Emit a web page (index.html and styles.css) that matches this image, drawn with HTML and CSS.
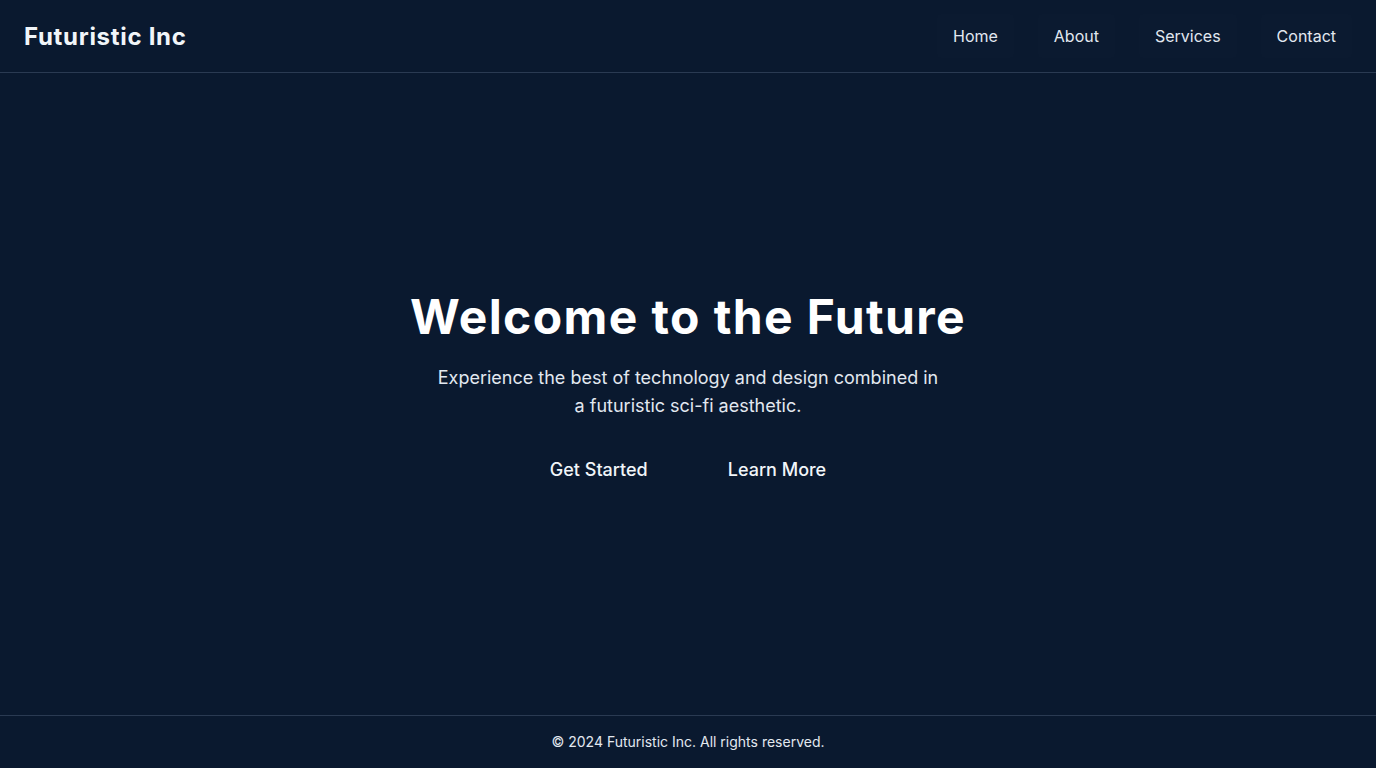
FILE: index.html
```html
<!DOCTYPE html>
<html lang="en">
<head>
<meta charset="utf-8">
<title>Futuristic Inc</title>
<link rel="stylesheet" href="styles.css">
</head>
<body>
<div class="page">
  <header class="header">
    <div class="logo">Futuristic Inc</div>
    <nav class="nav">
      <a class="nav-link" href="#">Home</a>
      <a class="nav-link" href="#">About</a>
      <a class="nav-link" href="#">Services</a>
      <a class="nav-link" href="#">Contact</a>
    </nav>
  </header>
  <main class="hero">
    <h1 class="title">Welcome to the Future</h1>
    <p class="subtitle">Experience the best of technology and design combined in a futuristic sci-fi aesthetic.</p>
    <div class="actions">
      <a class="btn" href="#">Get Started</a>
      <a class="btn" href="#">Learn More</a>
    </div>
  </main>
  <footer class="footer">© 2024 Futuristic Inc. All rights reserved.</footer>
</div>
</body>
</html>
```
FILE: styles.css
```css
* { box-sizing: border-box; }
html, body { margin: 0; padding: 0; }
body {
  background: #0a192f;
  color: #ccd6f6;
  font-family: Inter, "Noto Sans", sans-serif;
}
.page {
  min-height: 100vh;
  display: flex;
  flex-direction: column;
}
.header {
  height: 73px;
  display: flex;
  align-items: center;
  justify-content: space-between;
  padding: 0 24px;
  border-bottom: 1px solid #2a3a52;
}
.logo {
  font-size: 24px;
  font-weight: 700;
  color: #f1f5f9;
  letter-spacing: 0.7px;
}
.nav {
  display: flex;
  gap: 24px;
}
.nav-link {
  display: block;
  padding: 10px 16px;
  line-height: 24px;
  font-size: 16px;
  color: #e2e8f0;
  text-decoration: none;
  background: rgba(255,255,255,0.006);
  border-radius: 4px;
}
.hero {
  flex: 1;
  display: flex;
  flex-direction: column;
  align-items: center;
  justify-content: center;
  text-align: center;
  padding: 0 24px;
}
.title {
  margin: 0 0 19px;
  font-size: 48px;
  line-height: 56px;
  font-weight: 700;
  color: #ffffff;
  letter-spacing: 1.4px;
}
.subtitle {
  margin: 0 0 20px;
  max-width: 512px;
  font-size: 18px;
  line-height: 28px;
  color: #e2e8f0;
}
.actions {
  display: flex;
  gap: 32px;
}
.btn {
  display: block;
  padding: 16px 24px;
  font-size: 18px;
  line-height: 28px;
  font-weight: 500;
  color: #f1f5f9;
  text-decoration: none;
}
.footer {
  border-top: 1px solid #2a3a52;
  padding: 16px 0;
  line-height: 20px;
  font-size: 14px;
  text-align: center;
  color: #e2e8f0;
}
```
